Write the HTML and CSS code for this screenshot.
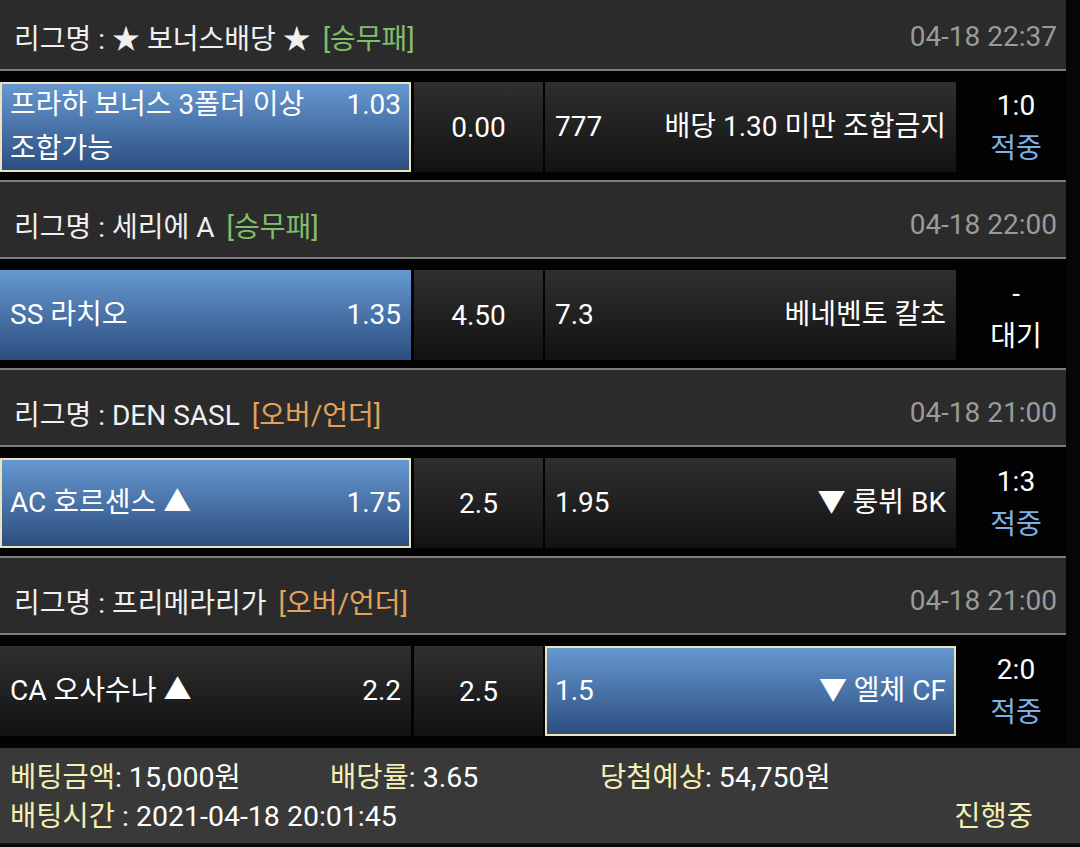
FILE: index.html
```html
<!DOCTYPE html>
<html lang="ko">
<head>
<meta charset="utf-8">
<title>Bet slip</title>
<link rel="stylesheet" href="styles.css">
</head>
<body>
<div class="page">
  <div class="league">
    <span class="lname">리그명 : ★ 보너스배당 ★</span><span class="tag green">[승무패]</span>
    <span class="date">04-18 22:37</span>
  </div>
  <div class="match">
    <div class="cell side sel bordered"><div class="inner"><span class="team">프라하 보너스 3폴더 이상 조합가능</span><span class="odd">1.03</span></div></div>
    <div class="cell mid">0.00</div>
    <div class="cell side"><div class="inner"><span class="odd first">777</span><span class="team right">배당 1.30 미만 조합금지</span></div></div>
    <div class="result"><span>1:0</span><span class="hit">적중</span></div>
  </div>

  <div class="league">
    <span class="lname">리그명 : 세리에 A</span><span class="tag green">[승무패]</span>
    <span class="date">04-18 22:00</span>
  </div>
  <div class="match">
    <div class="cell side sel"><div class="inner"><span class="team">SS 라치오</span><span class="odd">1.35</span></div></div>
    <div class="cell mid">4.50</div>
    <div class="cell side"><div class="inner"><span class="odd first">7.3</span><span class="team right">베네벤토 칼초</span></div></div>
    <div class="result"><span>-</span><span>대기</span></div>
  </div>

  <div class="league">
    <span class="lname">리그명 : DEN SASL</span><span class="tag orange">[오버/언더]</span>
    <span class="date">04-18 21:00</span>
  </div>
  <div class="match">
    <div class="cell side sel bordered"><div class="inner"><span class="team">AC 호르센스 ▲</span><span class="odd">1.75</span></div></div>
    <div class="cell mid">2.5</div>
    <div class="cell side"><div class="inner"><span class="odd first">1.95</span><span class="team right">▼ 룽뷔 BK</span></div></div>
    <div class="result"><span>1:3</span><span class="hit">적중</span></div>
  </div>

  <div class="league">
    <span class="lname">리그명 : 프리메라리가</span><span class="tag orange">[오버/언더]</span>
    <span class="date">04-18 21:00</span>
  </div>
  <div class="match">
    <div class="cell side"><div class="inner"><span class="team">CA 오사수나 ▲</span><span class="odd">2.2</span></div></div>
    <div class="cell mid">2.5</div>
    <div class="cell side sel bordered"><div class="inner"><span class="odd first">1.5</span><span class="team right">▼ 엘체 CF</span></div></div>
    <div class="result"><span>2:0</span><span class="hit">적중</span></div>
  </div>

  <div class="summary">
    <div class="sum-row">
      <span class="item w1"><span class="lbl">베팅금액</span>: 15,000원</span>
      <span class="item w2"><span class="lbl">배당률</span>: 3.65</span>
      <span class="item"><span class="lbl">당첨예상</span>: 54,750원</span>
    </div>
    <div class="sum-row split">
      <span class="item"><span class="lbl">배팅시간</span> : 2021-04-18 20:01:45</span>
      <span class="status">진행중</span>
    </div>
  </div>
</div>
</body>
</html>
```

FILE: styles.css
```css
html, body {
  margin: 0;
  padding: 0;
  background: #060608;
}
body {
  width: 1080px;
  height: 847px;
  overflow: hidden;
  font-family: Roboto, "Noto Sans CJK KR", sans-serif;
  color: #fff;
}
.page {
  width: 1066px;
  margin-top: -8px;
}
.league {
  box-sizing: border-box;
  height: 79px;
  border-top: 2px solid #7d7d7d;
  border-bottom: 2px solid #7d7d7d;
  background: #2b2b2b;
  display: flex;
  align-items: center;
  padding: 10px 9px 0 14px;
  font-size: 28px;
}
.lname { color: #f0f0f0; }
.tag { margin-left: 12px; }
.green { color: #80bf6b; }
.orange { color: #e2a25b; }
.date { margin-left: auto; color: #9a9a9a; }

.match {
  display: grid;
  grid-template-columns: 411px 134px 411px 110px;
  padding: 11px 0 8px;
  height: 90px;
  background: #020203;
}
.cell {
  box-sizing: border-box;
  height: 90px;
  background: linear-gradient(#2f2f2f, #121212);
  font-size: 28px;
  display: flex;
  align-items: center;
  padding: 0 10px;
}
.cell.sel {
  background: linear-gradient(#6698d1, #2c4e7f);
}
.cell.bordered {
  border: 2px solid #ebe3bb;
  padding: 0 8px;
}
.cell.mid {
  margin: 0 2px 0 3px;
  justify-content: center;
}
.inner {
  display: flex;
  align-items: baseline;
  width: 100%;
  line-height: 44px;
}
.team { flex: 1; word-break: keep-all; }
.team.right { text-align: right; }
.odd { margin-left: 12px; }
.odd.first { margin-left: 0; margin-right: 12px; }

.result {
  display: flex;
  flex-direction: column;
  align-items: center;
  justify-content: center;
  font-size: 28px;
  line-height: 43px;
  padding-left: 10px;
}
.hit { color: #7eb0e6; }

.summary {
  margin-top: 4px;
  height: 97px;
  box-sizing: border-box;
  background: #393939;
  border-bottom: 2px solid #111;
  padding: 10px 47px 0 10px;
  font-size: 28.5px;
  line-height: 39px;
  width: 1080px;
}
.sum-row { display: flex; }
.sum-row.split { justify-content: space-between; }
.w1 { width: 320px; }
.w2 { width: 270px; }
.lbl, .status { color: #f4efb3; }
```
